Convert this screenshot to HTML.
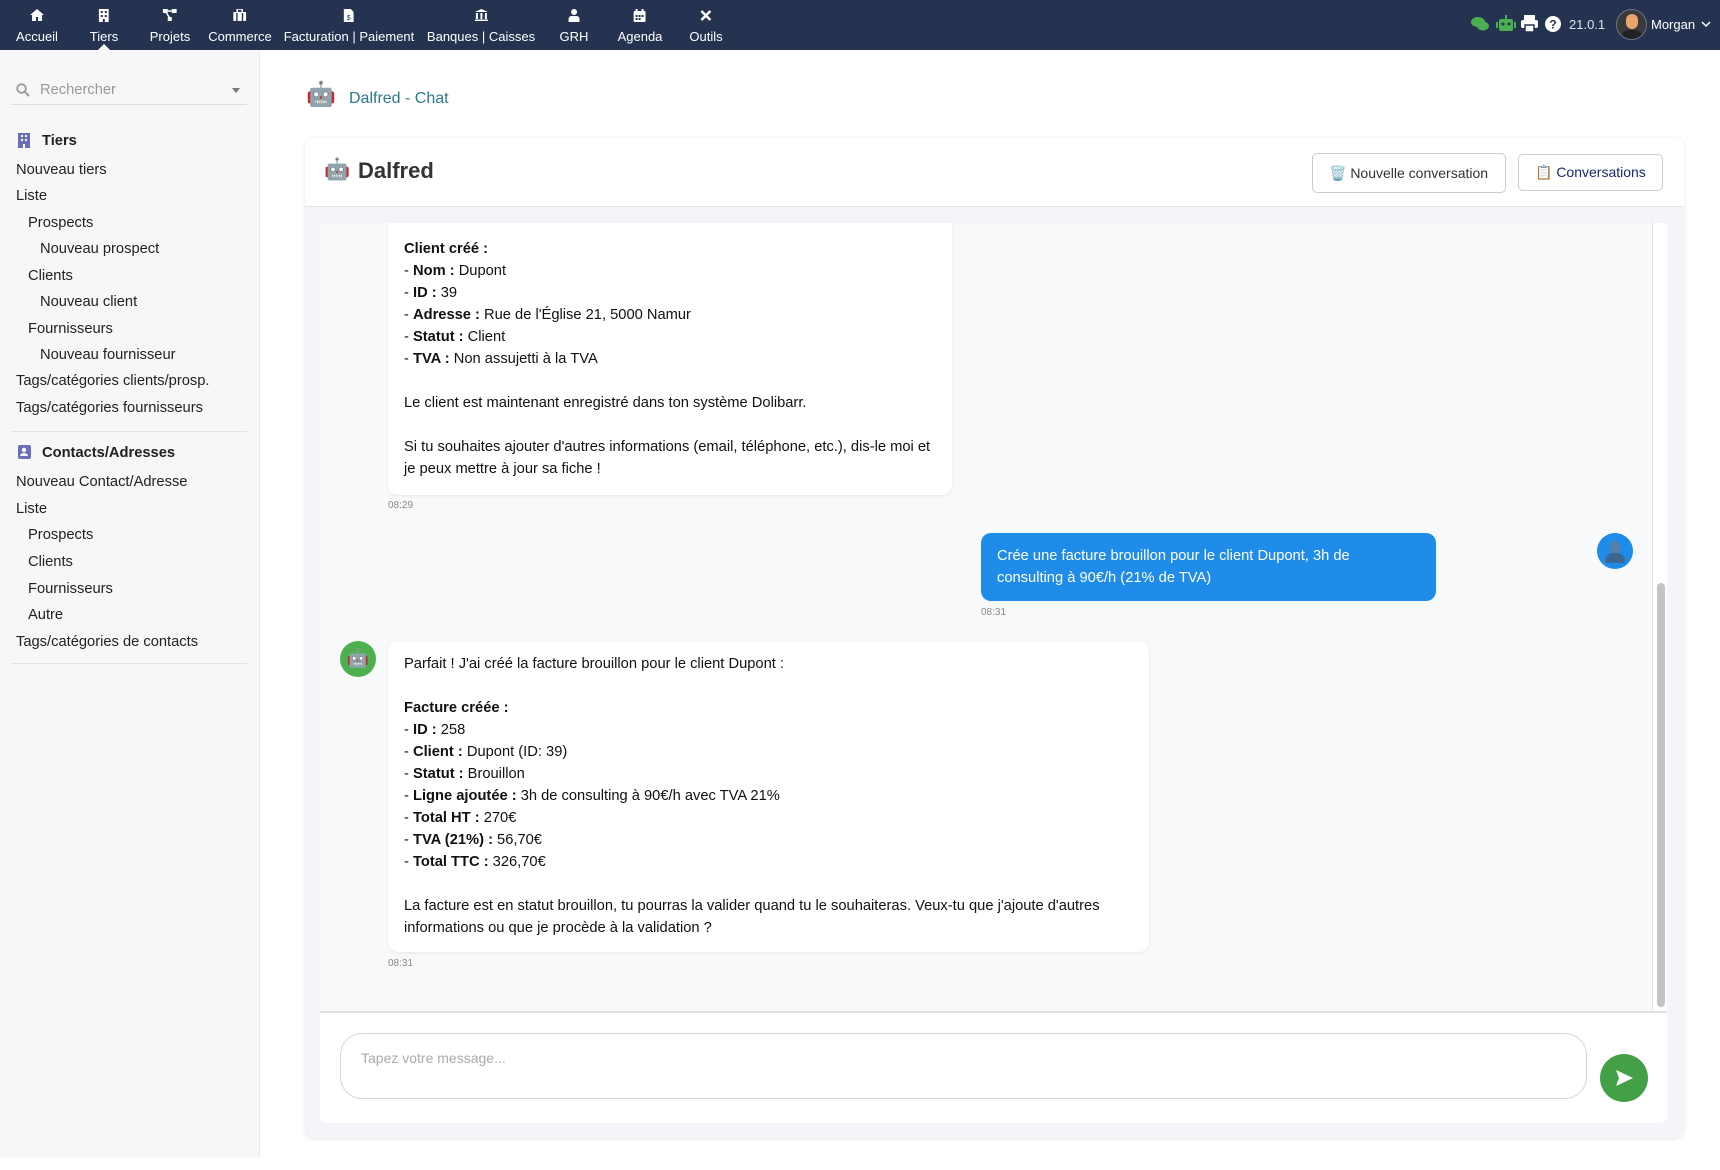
<!DOCTYPE html>
<html><head><meta charset="utf-8">
<style>
*{box-sizing:border-box;margin:0;padding:0}
body{width:1720px;height:1170px;position:relative;background:#fff;font-family:"Liberation Sans",sans-serif;color:#222;overflow:hidden}
.a{position:absolute;white-space:nowrap}
#nav{position:absolute;left:0;top:0;width:1720px;height:50px;background:#253351}
.ni{position:absolute;top:0;height:50px;color:#fff;font-size:13px;text-align:center;transform:translateX(-50%)}
.ni .ic{display:block;height:14px;margin-top:9px;font-size:12px;line-height:14px}
.ni .lb{display:block;margin-top:6px}
#side{position:absolute;left:0;top:50px;width:260px;height:1107px;background:#f7f7f7;border-right:1px solid #e8e8e8}
.s{position:absolute;font-size:14.7px;color:#222;white-space:nowrap}
.sep{position:absolute;left:11px;width:236px;height:1px;background:#e2e2e2}
.msg{font-size:14.7px;line-height:22px;color:#111}
.msg b{font-weight:bold}
.bub{position:absolute;background:#fff;border-radius:10px;box-shadow:0 1px 3px rgba(0,0,0,.08);padding:12px 16px;white-space:nowrap}
.t{position:absolute;font-size:10px;color:#888}
</style></head><body>
<div id="nav">
 <div class="ni" style="left:37px"><span class="ic"><svg width="14" height="12" viewBox="0 0 14 12"><path d="M7 0L0 6h2v6h4V8h2v4h4V6h2z" fill="#fff"/></svg></span><span class="lb">Accueil</span></div>
 <div class="ni" style="left:104px"><span class="ic"><svg width="10" height="13" viewBox="0 0 10 13"><rect x="0" y="0" width="10" height="13" fill="#fff"/><g fill="#253351"><rect x="2" y="2" width="2" height="2"/><rect x="6" y="2" width="2" height="2"/><rect x="2" y="6" width="2" height="2"/><rect x="6" y="6" width="2" height="2"/><rect x="4" y="10" width="2" height="3"/></g></svg></span><span class="lb">Tiers</span></div>
 <div style="position:absolute;left:98px;top:44px;width:0;height:0;border-left:6px solid transparent;border-right:6px solid transparent;border-bottom:6px solid #fff"></div>
 <div class="ni" style="left:170px"><span class="ic"><svg width="14" height="12" viewBox="0 0 14 12"><rect x="0" y="0" width="5" height="4" fill="#fff"/><rect x="9" y="0" width="5" height="4" fill="#fff"/><rect x="5" y="8" width="4" height="4" fill="#fff"/><path d="M3 3l4 6M5 2h4" stroke="#fff" stroke-width="1.5"/></svg></span><span class="lb">Projets</span></div>
 <div class="ni" style="left:240px"><span class="ic"><svg width="13" height="12" viewBox="0 0 13 12"><rect x="0" y="3" width="13" height="9" rx="1" fill="#fff"/><rect x="4" y="0" width="5" height="4" fill="none" stroke="#fff" stroke-width="1.5"/><rect x="3" y="4" width="1.4" height="8" fill="#253351"/><rect x="8.6" y="4" width="1.4" height="8" fill="#253351"/></svg></span><span class="lb">Commerce</span></div>
 <div class="ni" style="left:349px"><span class="ic"><svg width="10" height="13" viewBox="0 0 10 13"><path d="M0 0h7l3 3v10H0z" fill="#fff"/><text x="3" y="11" font-size="7" fill="#253351" font-family="Liberation Sans">$</text></svg></span><span class="lb">Facturation | Paiement</span></div>
 <div class="ni" style="left:481px"><span class="ic"><svg width="13" height="12" viewBox="0 0 13 12"><path d="M6.5 0L0 3h13z" fill="#fff"/><rect x="1" y="4" width="2" height="6" fill="#fff"/><rect x="5.5" y="4" width="2" height="6" fill="#fff"/><rect x="10" y="4" width="2" height="6" fill="#fff"/><rect x="0" y="10.5" width="13" height="1.5" fill="#fff"/></svg></span><span class="lb">Banques | Caisses</span></div>
 <div class="ni" style="left:574px"><span class="ic"><svg width="11" height="13" viewBox="0 0 11 13"><circle cx="5.5" cy="3" r="3" fill="#fff"/><path d="M0 13v-3a3 3 0 013-3h5a3 3 0 013 3v3z" fill="#fff"/></svg></span><span class="lb">GRH</span></div>
 <div class="ni" style="left:640px"><span class="ic"><svg width="12" height="13" viewBox="0 0 12 13"><rect x="0" y="2" width="12" height="11" rx="1" fill="#fff"/><rect x="2" y="0" width="2" height="3" fill="#fff"/><rect x="8" y="0" width="2" height="3" fill="#fff"/><g fill="#253351"><rect x="2" y="6" width="2" height="2"/><rect x="5" y="6" width="2" height="2"/><rect x="8" y="6" width="2" height="2"/><rect x="2" y="9" width="2" height="2"/><rect x="5" y="9" width="2" height="2"/></g></svg></span><span class="lb">Agenda</span></div>
 <div class="ni" style="left:706px"><span class="ic"><svg width="13" height="13" viewBox="0 0 13 13"><path d="M2 2l9 9M11 2l-9 9" stroke="#fff" stroke-width="2.5"/></svg></span><span class="lb">Outils</span></div>
 <svg class="a" style="left:1471px;top:16px" width="18" height="16" viewBox="0 0 18 16"><ellipse cx="7" cy="6" rx="7" ry="5" fill="#4caf50"/><ellipse cx="12" cy="10" rx="6" ry="4.5" fill="#4caf50"/></svg>
 <svg class="a" style="left:1496px;top:15px" width="20" height="17" viewBox="0 0 20 17"><rect x="3" y="4" width="14" height="12" rx="2" fill="#4caf50"/><rect x="9" y="0" width="2" height="4" fill="#4caf50"/><rect x="0" y="7" width="2" height="6" fill="#4caf50"/><rect x="18" y="7" width="2" height="6" fill="#4caf50"/><circle cx="7" cy="9" r="1.5" fill="#253351"/><circle cx="13" cy="9" r="1.5" fill="#253351"/></svg>
 <svg class="a" style="left:1521px;top:15px" width="17" height="17" viewBox="0 0 17 17"><rect x="3" y="0" width="11" height="5" fill="#fff"/><rect x="0" y="5" width="17" height="8" rx="2" fill="#fff"/><rect x="4" y="10" width="9" height="7" fill="#fff" stroke="#253351" stroke-width="1.5"/></svg>
 <svg class="a" style="left:1545px;top:16px" width="16" height="16" viewBox="0 0 16 16"><circle cx="8" cy="8" r="8" fill="#fff"/><text x="8" y="12.5" text-anchor="middle" font-size="12" font-weight="bold" fill="#253351" font-family="Liberation Sans">?</text></svg>
 <div class="a" style="left:1569px;top:17px;color:#dfe3ea;font-size:13px">21.0.1</div>
 <div class="a" style="left:1616px;top:9px;width:31px;height:31px;border-radius:50%;background:#3a3a3a;border:1px solid #6b7590;overflow:hidden"><div style="position:absolute;left:9px;top:4px;width:12px;height:15px;border-radius:6px;background:#e9a56b"></div><div style="position:absolute;left:3px;top:20px;width:24px;height:14px;border-radius:10px 10px 0 0;background:#222"></div></div>
 <div class="a" style="left:1651px;top:17px;color:#fff;font-size:13px">Morgan</div>
 <svg class="a" style="left:1701px;top:21px" width="10" height="7" viewBox="0 0 10 7"><path d="M1 1l4 4 4-4" stroke="#fff" stroke-width="1.5" fill="none"/></svg>
</div>

<div id="side">
 <svg class="a" style="left:16px;top:33px" width="14" height="14" viewBox="0 0 14 14"><circle cx="5.5" cy="5.5" r="4.3" stroke="#999" stroke-width="1.8" fill="none"/><path d="M8.8 8.8L13 13" stroke="#999" stroke-width="2"/></svg>
 <div class="s" style="left:40px;top:32px;color:#999">Rechercher</div>
 <div class="a" style="left:232px;top:38px;border-left:4px solid transparent;border-right:4px solid transparent;border-top:5px solid #777"></div>
 <div class="sep" style="top:54px;background:#ddd"></div>
 <svg class="a" style="left:18px;top:83px" width="12" height="15" viewBox="0 0 12 15"><rect width="12" height="15" fill="#6a6fb8"/><g fill="#fff"><rect x="3" y="2" width="2" height="2"/><rect x="7" y="2" width="2" height="2"/><rect x="3" y="6" width="2" height="2"/><rect x="7" y="6" width="2" height="2"/><rect x="5" y="11" width="2" height="4"/></g></svg>
 <div class="s" style="left:42px;top:83px;font-weight:bold">Tiers</div>
 <div class="s" style="left:16px;top:112px">Nouveau tiers</div>
 <div class="s" style="left:16px;top:138px">Liste</div>
 <div class="s" style="left:28px;top:165px">Prospects</div>
 <div class="s" style="left:40px;top:191px">Nouveau prospect</div>
 <div class="s" style="left:28px;top:218px">Clients</div>
 <div class="s" style="left:40px;top:244px">Nouveau client</div>
 <div class="s" style="left:28px;top:271px">Fournisseurs</div>
 <div class="s" style="left:40px;top:297px">Nouveau fournisseur</div>
 <div class="s" style="left:16px;top:323px">Tags/catégories clients/prosp.</div>
 <div class="s" style="left:16px;top:350px">Tags/catégories fournisseurs</div>
 <div class="sep" style="top:381px"></div>
 <svg class="a" style="left:18px;top:395px" width="13" height="14" viewBox="0 0 13 14"><rect width="13" height="14" rx="2" fill="#6a6fb8"/><circle cx="6" cy="5" r="2.2" fill="#fff"/><path d="M2 11a4 3 0 018 0z" fill="#fff"/></svg>
 <div class="s" style="left:42px;top:395px;font-weight:bold">Contacts/Adresses</div>
 <div class="s" style="left:16px;top:424px">Nouveau Contact/Adresse</div>
 <div class="s" style="left:16px;top:451px">Liste</div>
 <div class="s" style="left:28px;top:477px">Prospects</div>
 <div class="s" style="left:28px;top:504px">Clients</div>
 <div class="s" style="left:28px;top:531px">Fournisseurs</div>
 <div class="s" style="left:28px;top:557px">Autre</div>
 <div class="s" style="left:16px;top:584px">Tags/catégories de contacts</div>
 <div class="sep" style="top:613px"></div>
</div>

<div class="a" style="left:306px;top:82px;font-size:24px;line-height:26px">🤖</div>
<div class="a" style="left:349px;top:90px;font-size:16px;color:#2a7a8c">Dalfred - Chat</div>

<div class="a" style="left:305px;top:137px;width:1379px;height:1001px;background:#f3f5f8;border-radius:10px;box-shadow:0 1px 4px rgba(0,0,0,.1)"></div>
<div class="a" style="left:305px;top:137px;width:1379px;height:70px;background:#fff;border-radius:10px 10px 0 0;border-bottom:1px solid #e3e5e8"></div>
<div class="a" style="left:324px;top:158px;font-size:21px">🤖</div>
<div class="a" style="left:358px;top:158px;font-size:22px;font-weight:bold;color:#333">Dalfred</div>
<div class="a" style="left:1312px;top:153px;width:194px;height:40px;border:1px solid #ccc;border-radius:5px;background:#fff;font-size:14px;color:#333;padding:11px 0 0 16px">🗑️ Nouvelle conversation</div>
<div class="a" style="left:1518px;top:154px;width:145px;height:37px;border:1px solid #ccc;border-radius:5px;background:#fff;font-size:14px;color:#1a2a6e;padding:9px 0 0 16px">📋 Conversations</div>

<div class="a" style="left:320px;top:223px;width:1347px;height:900px;background:#fff;border-radius:0 0 8px 8px"></div>
<div class="a" style="left:320px;top:223px;width:1333px;height:788px;background:#f8f9fb;border-right:1px solid #e2e2e2"></div>
<div class="a" style="left:1657px;top:583px;width:8px;height:424px;background:#c3c3c3;border-radius:4px"></div>
<div class="a" style="left:320px;top:1011px;width:1347px;height:2px;background:#e0e0e0"></div>

<div class="bub msg" style="left:388px;top:223px;width:564px;height:272px;border-radius:0 0 10px 10px;padding-top:15px">
<b>Client créé :</b><br>- <b>Nom :</b> Dupont<br>- <b>ID :</b> 39<br>- <b>Adresse :</b> Rue de l'Église 21, 5000 Namur<br>- <b>Statut :</b> Client<br>- <b>TVA :</b> Non assujetti à la TVA<br><br>Le client est maintenant enregistré dans ton système Dolibarr.<br><br>Si tu souhaites ajouter d'autres informations (email, téléphone, etc.), dis-le moi et<br>je peux mettre à jour sa fiche !</div>
<div class="t" style="left:388px;top:500px">08:29</div>

<div class="a msg" style="left:981px;top:533px;width:455px;height:68px;background:#1e8ce8;border-radius:10px;color:#fff;padding:12px 16px">Crée une facture brouillon pour le client Dupont, 3h de<br>consulting à 90€/h (21% de TVA)</div>
<div class="a" style="left:1597px;top:533px;width:36px;height:36px;border-radius:50%;background:#1e8ce8;overflow:hidden"><div style="position:absolute;left:13px;top:8px;width:10px;height:13px;border-radius:5px;background:#5a7fa8"></div><div style="position:absolute;left:8px;top:20px;width:20px;height:10px;border-radius:9px 9px 2px 2px;background:#3f6591"></div></div>
<div class="t" style="left:981px;top:607px">08:31</div>

<div class="a" style="left:340px;top:641px;width:36px;height:36px;border-radius:50%;background:#4caf50;text-align:center;font-size:18px;line-height:34px">🤖</div>
<div class="bub msg" style="left:388px;top:642px;width:761px;height:310px;padding-top:11px">
Parfait ! J'ai créé la facture brouillon pour le client Dupont :<br><br><b>Facture créée :</b><br>- <b>ID :</b> 258<br>- <b>Client :</b> Dupont (ID: 39)<br>- <b>Statut :</b> Brouillon<br>- <b>Ligne ajoutée :</b> 3h de consulting à 90€/h avec TVA 21%<br>- <b>Total HT :</b> 270€<br>- <b>TVA (21%) :</b> 56,70€<br>- <b>Total TTC :</b> 326,70€<br><br>La facture est en statut brouillon, tu pourras la valider quand tu le souhaiteras. Veux-tu que j'ajoute d'autres<br>informations ou que je procède à la validation ?</div>
<div class="t" style="left:388px;top:958px">08:31</div>

<div class="a" style="left:340px;top:1033px;width:1247px;height:66px;border:1px solid #d5d5d5;border-radius:22px;background:#fff;padding:16px 20px;font-size:14px;color:#aaa">Tapez votre message...</div>
<div class="a" style="left:1600px;top:1054px;width:48px;height:48px;border-radius:50%;background:#43a047"><svg style="position:absolute;left:16px;top:16px" width="17" height="16" viewBox="0 0 17 16"><path d="M0 0l17 8-17 8 3-8z" fill="#fff"/></svg></div>
</body></html>
